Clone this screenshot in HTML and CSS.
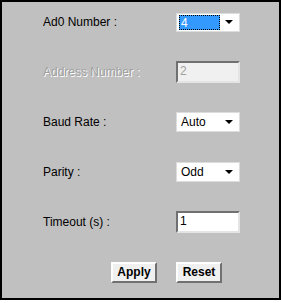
FILE: index.html
```html
<!DOCTYPE html>
<html lang="en">
<head>
    <meta charset="UTF-8">
    <title>Modbus Settings</title>
    <link rel="stylesheet" href="styles.css">
</head>
<body>
    <div class="panel">
        <div class="form-grid">
            <span class="label">Ad0 Number :</span>
            <div class="select focused">
                <span class="select-value">4</span>
                <svg class="arrow" width="8" height="4" viewBox="0 0 8 4"><polygon points="0,0 8,0 4,4" fill="#000"/></svg>
            </div>

            <span class="label disabled">Address Number :</span>
            <div class="text-input disabled">2</div>

            <span class="label">Baud Rate :</span>
            <div class="select">
                <span class="select-value">Auto</span>
                <svg class="arrow" width="8" height="4" viewBox="0 0 8 4"><polygon points="0,0 8,0 4,4" fill="#000"/></svg>
            </div>

            <span class="label">Parity :</span>
            <div class="select">
                <span class="select-value">Odd</span>
                <svg class="arrow" width="8" height="4" viewBox="0 0 8 4"><polygon points="0,0 8,0 4,4" fill="#000"/></svg>
            </div>

            <span class="label">Timeout (s) :</span>
            <div class="text-input">1</div>

            <button class="btn btn-apply" type="button">Apply</button>
            <button class="btn" type="button">Reset</button>
        </div>
    </div>
</body>
</html>
```

FILE: styles.css
```css
body {
    margin: 0;
    background-color: #ffffff;
    font-family: "Liberation Sans", Arial, sans-serif;
    font-size: 12px;
    color: #000;
}

.panel {
    box-sizing: border-box;
    width: 281px;
    height: 300px;
    border: 2px solid #000;
    background-color: #c0c0c0;
    padding: 9px 0 0 41px;
}

.form-grid {
    display: grid;
    grid-template-columns: 133px 64px;
    grid-auto-rows: 22px;
    row-gap: 28px;
    align-items: center;
}

.label {
    line-height: 14px;
}

.label.disabled {
    color: #a0a0a0;
    text-shadow: 1px 1px 0 #ffffff;
}

/* drop-down boxes */
.select {
    box-sizing: border-box;
    height: 20px;
    display: flex;
    align-items: center;
    justify-content: space-between;
    background-color: #ffffff;
    border: 1px solid #dcdcdc;
    padding: 0 6px 0 3px;
}

.select-value {
    padding-left: 1px;
    line-height: 14px;
}

.select.focused {
    height: 19px;
    padding-left: 2px;
}

.select.focused .select-value {
    box-sizing: border-box;
    width: 41px;
    height: 15px;
    padding-left: 1px;
    background-color: #3399ff;
    color: #ffffff;
    border: 1px dotted #000;
}

/* text boxes */
.text-input {
    box-sizing: border-box;
    height: 22px;
    line-height: 17px;
    padding-left: 2px;
    background-color: #ffffff;
    border-style: solid;
    border-width: 2px;
    border-color: #707070 #e4e4e4 #e4e4e4 #707070;
}

.text-input.disabled {
    background-color: #f0f0f0;
    color: #a0a0a0;
}

/* buttons */
.btn {
    box-sizing: border-box;
    width: 46px;
    height: 21px;
    padding: 0;
    background-color: #f0f0f0;
    font-family: "Liberation Sans", Arial, sans-serif;
    font-size: 12px;
    font-weight: bold;
    color: #000;
    border-style: solid;
    border-width: 2px;
    border-color: #ffffff #707070 #707070 #ffffff;
    cursor: pointer;
}

.btn-apply {
    justify-self: end;
    margin-right: 19px;
}
```
